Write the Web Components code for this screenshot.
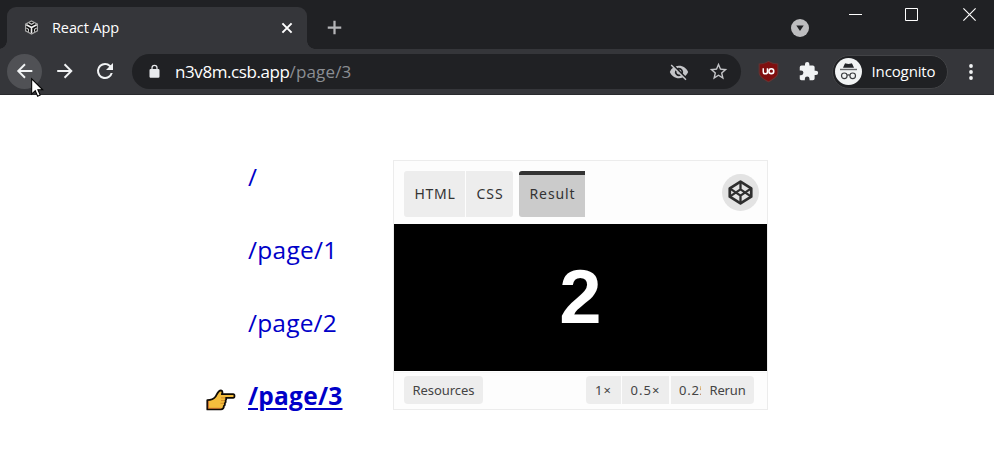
<!DOCTYPE html>
<html lang="en"><head><meta charset="utf-8"><title>React App</title>
<style>html,body{margin:0;background:#fff;height:470px;overflow:hidden;font-family:"Open Sans","Noto Sans",sans-serif}</style></head>
<body><browser-window></browser-window>
<script>
const define=(name,html,after)=>customElements.define(name,class extends HTMLElement{
  connectedCallback(){
    if(this.shadowRoot)return;
    this.attachShadow({mode:'open'}).innerHTML=html;
    if(after)after(this,this.shadowRoot);
  }
});

// A text run whose tracking is spread so that it fills the width given in "w".
define('text-run','<style>:host{display:block;white-space:nowrap;flex:none}span{display:inline-block}:host([underline]) span{text-decoration:underline;text-decoration-thickness:2px;text-underline-offset:3px}</style><span><slot></slot></span>',(h,r)=>{
  const s=r.querySelector('span'),w=+h.getAttribute('w'),n=h.textContent.length;
  h.style.width=w+'px';
  s.style.letterSpacing=((w-s.getBoundingClientRect().width)/n)+'px';
});

const icons={
 cube:'<path d="M8 1 14.300 4.500v7L8 15 1.700 11.500v-7z" fill="#0c0c0c" stroke="#a9a9a9" stroke-width="1.300"/><path d="M2.500 5 8 8l5.500-3M8 8v6" fill="none" stroke="#f0f0f0" stroke-width="1.700"/><path d="M5.500 3.200 8 4.600l2.500-1.400M2.500 8.600 4.800 9.900v2.600M13.500 8.600 11.200 9.900v2.600" fill="none" stroke="#cfcfcf" stroke-width="1.100"/>',
 close:'<path d="m3.400 3.400 9.200 9.200m0-9.200-9.200 9.200" stroke="#fff" stroke-width="2" fill="none"/>',
 plus:'<path d="M8 .8v14.400M.8 8h14.400" stroke="#b4b5b8" stroke-width="2.400"/>',
 back:'<path d="M20 12H5M12 4.600 4.600 12l7.400 7.400" fill="none" stroke="#f1f3f4" stroke-width="2.100"/>',
 forward:'<path d="M3.500 12h15M11.500 4.600l7.400 7.400-7.400 7.400" fill="none" stroke="#f1f3f4" stroke-width="2.100"/>',
 reload:'<path fill="#f1f3f4" d="M17.650 6.350A7.960 7.960 0 0 0 12 4a8 8 0 1 0 7.730 10h-2.080A6 6 0 1 1 12 6c1.660 0 3.140.69 4.220 1.780L13 11h7V4z"/>',
 lock:'<path fill="#e8eaed" d="M18 8h-1V6A5 5 0 0 0 7 6v2H6a2 2 0 0 0-2 2v10c0 1.100.9 2 2 2h12a2 2 0 0 0 2-2V10a2 2 0 0 0-2-2zm-9 0V6a3 3 0 0 1 6 0v2z"/>',
 eye:'<path fill="#c4c5c8" d="M12 7a5 5 0 0 1 4.640 6.830l2.920 2.920A11.800 11.800 0 0 0 23 12C21.270 7.610 17 4.500 12 4.500c-1.400 0-2.740.25-3.980.7l2.160 2.160C10.740 7.130 11.350 7 12 7zM2 4.270l2.740 2.740A11.800 11.800 0 0 0 1 12c1.730 4.390 6 7.500 11 7.500 1.550 0 3.030-.3 4.380-.84L19.730 22 21 20.730 3.270 3zM7.530 9.800l1.550 1.550A3 3 0 0 0 12.650 14.920l1.550 1.550A5 5 0 0 1 7.530 9.800zm4.310-.78 3.150 3.150.02-.16a3 3 0 0 0-3.010-3z"/>',
 star:'<path fill="#c4c5c8" d="m22 9.240-7.190-.62L12 2 9.190 8.630 2 9.240l5.460 4.730L5.820 21 12 17.270 18.180 21l-1.630-7.030zM12 15.400l-3.760 2.270 1-4.280-3.320-2.880 4.380-.38L12 6.100l1.710 4.040 4.380.38-3.320 2.880 1 4.280z"/>',
 shield:'<path d="M10 .3c2.500 1.700 5.400 2.400 8.900 2.500v8.700c0 4-5.900 6.500-8.900 8.400-3-1.900-8.900-4.400-8.900-8.400V2.800C4.600 2.700 7.500 2 10 .3z" fill="#800f0f" stroke="#633433" stroke-width="1"/><path d="M5 7v3.200a2 2 0 0 0 4 0V7v5" fill="none" stroke="#fff" stroke-width="1.400"/><circle cx="12.700" cy="9.700" r="2.300" fill="none" stroke="#fff" stroke-width="1.500"/>',
 puzzle:'<path fill="#f1f3f4" d="M20.500 11H19V7a2 2 0 0 0-2-2h-4V3.500a2.500 2.500 0 0 0-5 0V5H4a2 2 0 0 0-2 2v3.800h1.500a2.700 2.700 0 0 1 0 5.400H2V20c0 1.100.9 2 2 2h3.800v-1.500a2.700 2.700 0 0 1 5.400 0V22H17a2 2 0 0 0 2-2v-4h1.500a2.500 2.500 0 0 0 0-5z"/>',
 incognito:'<circle cx="13.500" cy="13.500" r="13.500" fill="#f1f3f4"/><path d="M8 9.800 9.700 6q.3-.8 1.200-.6l2.600.6 2.600-.6q.9-.2 1.200.6L19 9.800z" fill="#24262a"/><path d="M5 10.800h17v1.400H5z" fill="#66686b"/><g fill="none" stroke="#3b3d40" stroke-width="1.200"><circle cx="9.300" cy="17.800" r="2.800"/><circle cx="17.700" cy="17.800" r="2.800"/><path d="M12.200 17.300q1.300-.9 2.600 0"/></g>',
 dots:'<g fill="#f1f3f4"><circle cx="8" cy="2" r="1.900"/><circle cx="8" cy="8" r="1.900"/><circle cx="8" cy="14" r="1.900"/></g>',
 drop:'<circle cx="9" cy="9" r="9" fill="#bdbdbf"/><path d="M5.300 6.500h7.400L9 12z" fill="#202124"/>',
 minimize:'<path d="M0 6.500h13" stroke="#fff"/>',
 maximize:'<path d="M.5.5h12v12H.5z" stroke="#fff" fill="none"/>',
 exit:'<path d="m.4.4 12.200 12.200m0-12.200L.4 12.600" stroke="#fff" stroke-width="1.150"/>',
 pen:'<g fill="none" stroke="#2e2e2e" stroke-width="2.600" stroke-linejoin="round"><path d="M12 1.600 22.300 8v8L12 22.400 1.700 16V8z"/><path d="m1.700 8 10.300 7L22.300 8M1.700 16 12 9l10.300 7M12 1.800V9M12 15v7.200" stroke-width="2.200"/></g>',
 hand:'<path d="M1.300 11.200c3 0 6.500-1.200 8.300-3.700C11 5 12.600 1.200 15 1.500c2 .3 1.600 2.500.8 3.700h11.400c1.700 0 1.700 3.600 0 3.600h-7.500c.8 1 .7 2.200-.4 2.700.8 1.100.5 2.300-.7 2.800.6 1.200.2 2.300-.8 2.700.2 1.800-1 3.400-2.800 3.400H1.300z" fill="#f4bd3d" stroke="#100b05" stroke-width="1.800" stroke-linejoin="round"/><path d="M2.400 12v7.300h12.500" fill="none" stroke="#c9652f" stroke-width=".8"/><path d="M15 8.900h4.500M15 11.600h3.500M14.500 14.300h3.500" stroke="#d58c27"/>',
 cursor:'<path d="M.7.900v16l3.800-3.500 2.500 5.800 2.700-1.200-2.500-5.600h5.100z" fill="#fff" stroke="#000" stroke-width="1.100"/>'
};
const boxes={cube:16,close:16,plus:16,back:24,forward:24,reload:24,lock:24,eye:24,star:24,shield:20,puzzle:24,incognito:27,dots:16,drop:18,minimize:13,maximize:13,exit:13,pen:24,hand:30,cursor:20};
define('line-icon','<style>:host{display:block;flex:none}svg{display:block;overflow:visible}</style><svg></svg>',(h,r)=>{
  const n=h.getAttribute('name'),s=h.getAttribute('size'),v=r.querySelector('svg');
  v.setAttribute('viewBox',`0 0 ${boxes[n]} ${boxes[n]}`);v.setAttribute('width',s);v.setAttribute('height',s);v.innerHTML=icons[n];
});

define('tab-strip',`<style>
:host{display:flex;height:49px;background:#202124;color:#fff;box-sizing:border-box;padding-left:7px;font-size:14.500px;line-height:20px}
.tab{position:relative;width:300px;height:42.500px;margin-top:6.500px;box-sizing:border-box;background:#35363a;border-radius:9px 9px 0 0;display:flex;align-items:center;padding:0 12px 0 17px}
.tab:before,.tab:after{content:"";position:absolute;bottom:0;width:8px;height:8px}
.tab:before{left:-8px;background:radial-gradient(circle at 0 0,transparent 7.500px,#35363a 8px)}
.tab:after{right:-8px;background:radial-gradient(circle at 100% 0,transparent 7.500px,#35363a 8px)}
.tab text-run{margin-left:13px}.close{margin-left:auto}
.plus{margin:20px 0 0 20px}.drop{margin:19px 0 0 auto}.win{display:flex;gap:43px;margin:8px 18px 0 40px}.win line-icon:last-child{margin-left:2px}
</style><div class="tab"><line-icon name="cube" size="15"></line-icon><text-run w="67">React App</text-run><line-icon class="close" name="close" size="16"></line-icon></div>
<line-icon class="plus" name="plus" size="15"></line-icon><line-icon class="drop" name="drop" size="18"></line-icon>
<div class="win"><line-icon name="minimize" size="13"></line-icon><line-icon name="maximize" size="13"></line-icon><line-icon name="exit" size="13"></line-icon></div>`);

define('tool-bar',`<style>
:host{display:flex;align-items:center;height:46px;box-sizing:border-box;background:#35363a;border-bottom:1px solid #292a2d;padding-left:7px;color:#fff}
.b{width:35px;height:35px;border-radius:50%;display:grid;place-items:center;margin-right:5px;position:relative;top:-.5px}
.b.on{background:#505155}.cur{position:absolute;left:24px;top:24.500px;z-index:3}
.omni{width:609px;height:35px;box-sizing:border-box;border-radius:18px;background:#202124;display:flex;align-items:center;margin-left:5px;padding:0 12.500px 0 15px;font-size:17px;line-height:24px}
.omni .u{margin-left:13px}.gray{color:#8b8e93}.omni .e{margin-left:auto;margin-right:19px}
.pill{margin-left:13px;width:116px;height:34px;border:1px solid #424346;box-sizing:border-box;border-radius:17px;background:#202124;display:flex;align-items:center;padding-left:1.500px;font-size:15px}
.pill line-icon{margin-bottom:1px}
.pill text-run{margin-left:10px;padding-bottom:2px}
</style><div class="b on"><line-icon name="back" size="22"></line-icon><line-icon class="cur" name="cursor" size="19"></line-icon></div><div class="b"><line-icon name="forward" size="22"></line-icon></div><div class="b"><line-icon name="reload" size="24"></line-icon></div>
<div class="omni"><line-icon name="lock" size="15"></line-icon><text-run class="u" w="114.500">n3v8m.csb.app</text-run><text-run class="gray" w="62">/page/3</text-run><line-icon class="e" name="eye" size="20"></line-icon><line-icon name="star" size="21"></line-icon></div>
<line-icon style="margin-left:17px" name="shield" size="21"></line-icon><line-icon style="margin-left:19px" name="puzzle" size="21"></line-icon>
<div class="pill"><line-icon name="incognito" size="27"></line-icon><text-run w="64">Incognito</text-run></div><line-icon style="margin-left:15px" name="dots" size="16"></line-icon>`);

define('nav-link',`<style>:host{display:flex;height:73px;align-items:center;color:#0000c8;font-size:24.500px}
.m{width:42px;flex:none}:host([current]){font-weight:700;}
:host(:not([current])) .m line-icon{display:none}.m line-icon{padding-top:17px}
</style><div class="m"><line-icon name="hand" size="30"></line-icon></div><span class="t"></span>`,(h,r)=>{
 const t=document.createElement('text-run');t.setAttribute('w',h.getAttribute('w'));t.textContent=h.getAttribute('label');if(h.hasAttribute('current'))t.setAttribute('underline','');r.querySelector('.t').replaceWith(t);
});

define('pen-button',`<style>:host{display:flex;align-items:center;justify-content:center;box-sizing:border-box;background:#ededed;color:#444;height:28px;font-size:13px;overflow:hidden;flex:none}
:host([tab]){height:46px;font-size:14px;color:#333;padding:0 0 1px 1px}:host([active]){background:#cbcbcb;border-top:4px solid #333;padding-bottom:5px}</style><slot></slot>`);

define('pen-embed',`<style>
:host{display:flex;flex-direction:column;width:375px;height:250px;box-sizing:border-box;border:1px solid #ececec;background:#fdfdfd;font-family:"Noto Sans",sans-serif}
header{height:63px;display:flex;padding:10px 8px 0 10px;box-sizing:border-box}
.logo{margin:3px 0 0 auto;width:37px;height:37px;border-radius:50%;background:#e3e3e3;display:grid;place-items:center}
main{height:147px;background:#000;color:#fff;display:grid;place-items:center;font:bold 76px/84px "Liberation Sans",Arial,sans-serif}
main span{padding-bottom:1px}
.clip{max-width:22.500px;overflow:hidden}
footer{height:38px;display:flex;padding:5px 13px 0 10px;box-sizing:border-box;background:linear-gradient(#fff 0 1px,#f7f7f7 1px 2px,#fdfdfd 2px)}
</style><header><pen-button tab style="width:61px;border-radius:3px 0 0 3px"><text-run w="41">HTML</text-run></pen-button><pen-button tab style="width:47px;margin-left:1px;border-radius:0 3px 3px 0"><text-run w="27">CSS</text-run></pen-button><pen-button tab active style="width:66px;margin-left:6px;border-radius:3px 0 0 3px"><text-run w="46">Result</text-run></pen-button><div class="logo"><line-icon name="pen" size="25"></line-icon></div></header>
<main><span>2</span></main>
<footer><pen-button style="width:79px;border-radius:4px"><text-run w="62">Resources</text-run></pen-button><pen-button style="width:35px;margin-left:auto;border-radius:4px 0 0 4px"><text-run w="17">1×</text-run></pen-button><pen-button style="width:47px;margin-left:1px"><text-run w="30">0.5×</text-run></pen-button><pen-button style="width:30px;margin-left:2px;justify-content:flex-start;padding-left:8px"><text-run class="clip" w="37">0.25×</text-run></pen-button><pen-button style="width:53px;border-radius:0 4px 4px 0"><text-run w="36">Rerun</text-run></pen-button></footer>`);

define('browser-window',`<style>:host{display:block;width:994px;height:470px;background:#fff}.page{display:flex;padding-left:206px}nav{width:187px;padding-top:44.500px}pen-embed{margin-top:65px}</style>
<tab-strip></tab-strip><tool-bar></tool-bar><div class="page"><nav><nav-link label="/" w="10"></nav-link><nav-link label="/page/1" w="89.500"></nav-link><nav-link label="/page/2" w="89"></nav-link><nav-link label="/page/3" w="94.500" current></nav-link></nav><pen-embed></pen-embed></div>`);
</script></body></html>
